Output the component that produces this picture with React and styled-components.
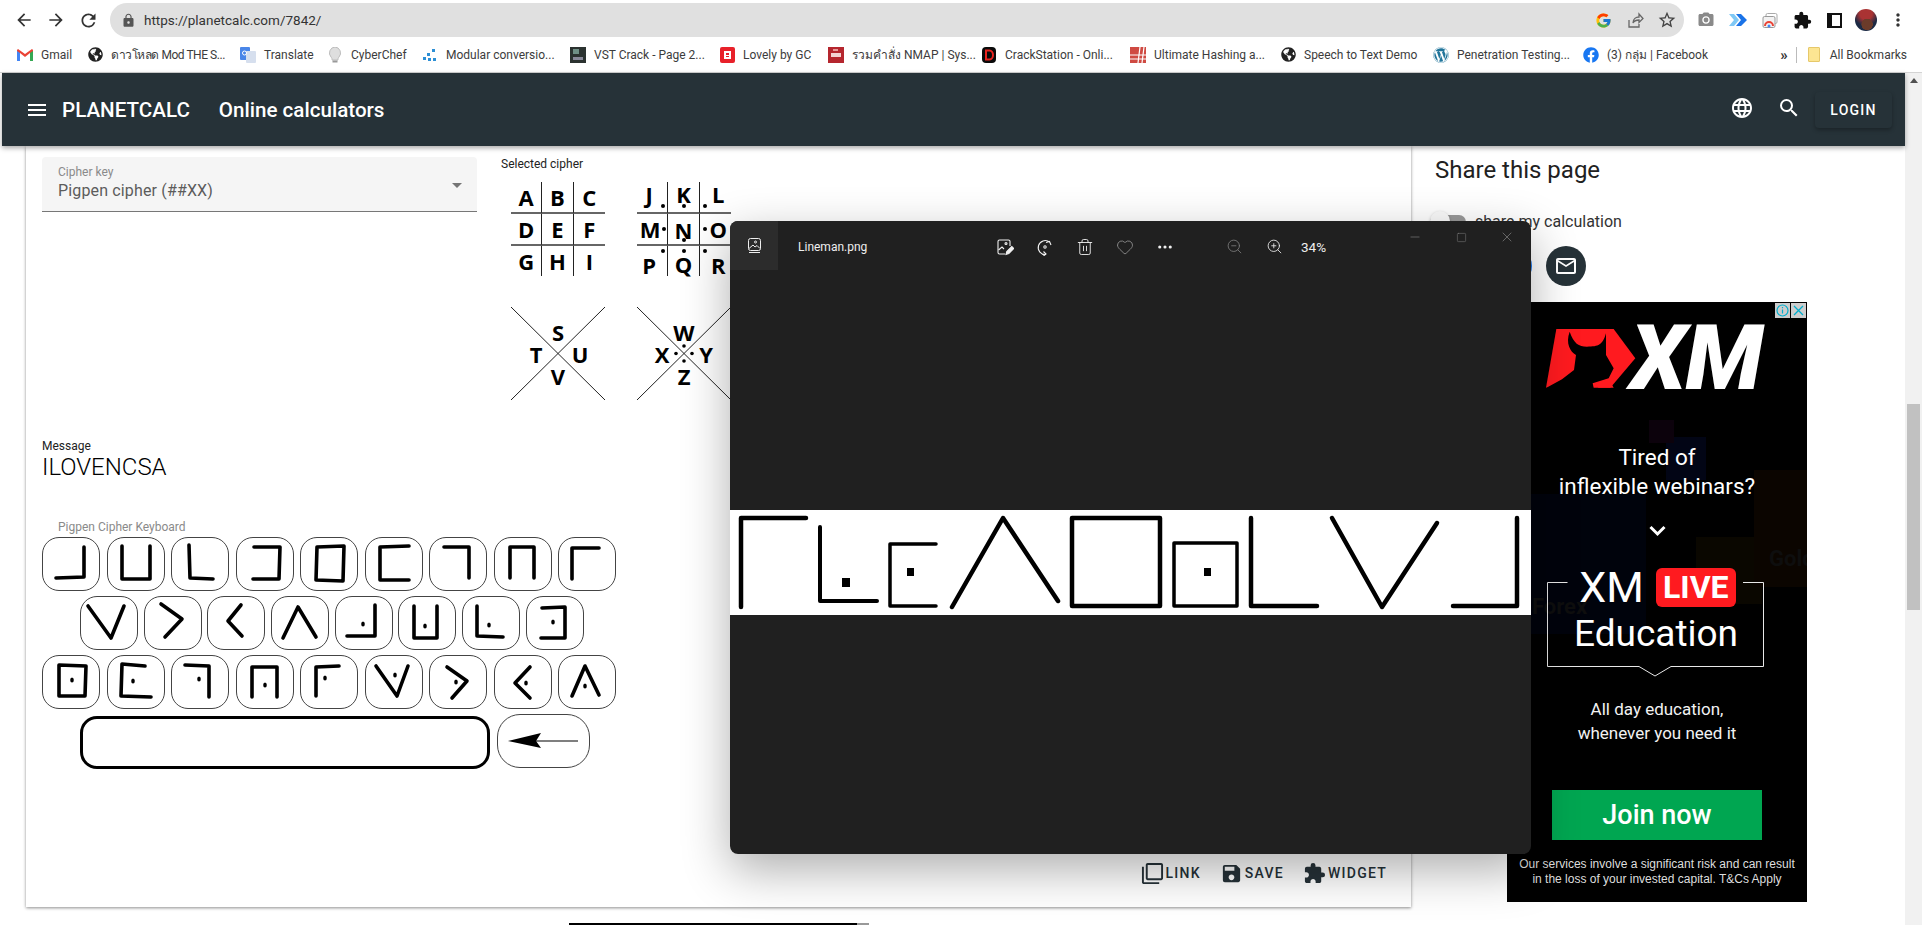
import React from 'react'
import styled, { createGlobalStyle } from 'styled-components'
import {
  MdArrowBack,
  MdArrowForward,
  MdRefresh,
  MdLock,
  MdStarBorder,
  MdCameraAlt,
  MdExtension,
  MdMoreVert,
  MdMenu,
  MdLanguage,
  MdSearch,
  MdMailOutline,
  MdFilterNone,
  MdSave,
} from 'react-icons/md'
import { FcGoogle } from 'react-icons/fc'
import { FaGlobeAmericas, FaWordpress, FaFacebook } from 'react-icons/fa'
import { Trash2, Heart, Ellipsis, ZoomIn, ZoomOut, Minus, Square, X } from 'lucide-react'

const GlobalStyle = createGlobalStyle`
  html, body {
    margin: 0;
    padding: 0;
    background: #fff;
    overflow: hidden;
    font-family: Roboto, "Liberation Sans", sans-serif;
  }
  * {
    box-sizing: border-box;
  }
`

const Page = styled.div`
  position: relative;
  width: 1922px;
  height: 925px;
  overflow: hidden;
  display: flex;
  flex-direction: column;
`

/* browser chrome */

const Toolbar = styled.div`
  height: 37px;
  padding: 3px 8px 0;
  display: flex;
  align-items: flex-start;
  color: #333;
`

const ToolButton = styled.div`
  width: ${(p) => p.$w || 32}px;
  height: 34px;
  flex-shrink: 0;
  display: flex;
  align-items: center;
  justify-content: center;
  color: ${(p) => p.$color || '#333'};
`

const UrlBar = styled.div`
  flex: 1;
  height: 34px;
  margin: 0 6px;
  padding: 0 1px 0 11px;
  border-radius: 17px;
  background: #e0e0e0;
  display: flex;
  align-items: center;
  font-size: 13.5px;
  color: #333;
`

const UrlText = styled.span`
  margin-left: 8px;
`

const UrlTools = styled.div`
  margin-left: auto;
  display: flex;
`

const Avatar = styled.div`
  width: 22px;
  height: 22px;
  border-radius: 50%;
  background: radial-gradient(circle at 55% 70%, #6b3b2a 0 28%, transparent 30%),
    radial-gradient(circle at 50% 20%, #a33 0 30%, #1c2a44 60%);
`

const Bookmarks = styled.div`
  height: 36px;
  padding: 0 15px 0 17px;
  display: flex;
  align-items: center;
  border-bottom: 1px solid #d4d4d4;
  font-size: 12px;
  color: #3c3c3c;
`

const Bookmark = styled.div`
  width: ${(p) => (p.$w ? `${p.$w}px` : 'auto')};
  flex-shrink: 0;
  display: flex;
  align-items: center;
  gap: 8px;
  white-space: nowrap;
  letter-spacing: ${(p) => (p.$tight ? '-0.45px' : 'normal')};
`

const BookmarksEnd = styled.div`
  margin-left: auto;
  display: flex;
  align-items: center;
`

const Chevrons = styled.span`
  font-size: 15px;
  font-weight: 700;
  color: #333;
`

const BarDivider = styled.span`
  width: 1px;
  height: 16px;
  margin: 0 11px 0 8px;
  background: #bbb;
`

const Folder = styled.span`
  width: 12px;
  height: 15px;
  margin-right: 10px;
  background: #fce592;
  border: 1px solid #e6c86a;
  border-radius: 1px;
`

const Fav = styled.span`
  width: 16px;
  height: 16px;
  flex-shrink: 0;
  display: flex;
  align-items: center;
  justify-content: center;
`

/* site */

const AppRow = styled.div`
  flex: 1;
  min-height: 0;
  display: flex;
  padding-left: 2px;
`

const Main = styled.div`
  flex: 1;
  min-width: 0;
  display: flex;
  flex-direction: column;
`

const AppBar = styled.header`
  position: relative;
  z-index: 2;
  height: 73px;
  flex-shrink: 0;
  padding: 0 13px 0 23px;
  display: flex;
  align-items: center;
  background: #263238;
  color: #fff;
  box-shadow: 0 2px 5px rgba(0, 0, 0, 0.35);
`

const Brand = styled.span`
  margin-left: 13px;
  font-size: 20.6px;
  font-weight: 500;
`

const AppTitle = styled.span`
  margin-left: 29px;
  font-size: 20.6px;
  font-weight: 500;
`

const BarIcon = styled.span`
  display: flex;
  margin-left: ${(p) => p.$ml};
  margin-top: -3px;
`

const LoginButton = styled.button`
  width: 77px;
  height: 36px;
  margin-left: 14px;
  border: 0;
  border-radius: 4px;
  background: #263238;
  color: #fff;
  font-family: inherit;
  font-size: 14px;
  font-weight: 500;
  letter-spacing: 1.25px;
  box-shadow: 0 2px 4px rgba(0, 0, 0, 0.3);
`

const Content = styled.div`
  flex: 1;
  min-height: 0;
  padding-left: 24px;
  display: flex;
`

const Column = styled.div`
  width: 1385px;
  flex-shrink: 0;
  display: flex;
  flex-direction: column;
`

const Card = styled.main`
  height: 761px;
  padding: 11px 24px 23px 16px;
  display: flex;
  flex-direction: column;
  background: #fff;
  box-shadow: 0 1px 3px rgba(0, 0, 0, 0.45);
`

const NextAd = styled.div`
  width: 300px;
  height: 2px;
  margin: 16px 0 0 543px;
  background: linear-gradient(90deg, #000 0 96%, #999 96%);
`

const TopRow = styled.div`
  display: flex;
`

const SelectBox = styled.div`
  width: 435px;
  height: 55px;
  padding: 7px 16px 0;
  position: relative;
  background: #f5f5f5;
  border-bottom: 1px solid #777;
  border-radius: 4px 4px 0 0;
`

const SelectLabel = styled.div`
  font-size: 12px;
  line-height: 16px;
  color: #8a8a8a;
`

const SelectValue = styled.div`
  margin-top: 1px;
  font-size: 16px;
  line-height: 20px;
  letter-spacing: 0.15px;
  color: #5c5c5c;
`

const SelectArrow = styled.span`
  position: absolute;
  right: 15px;
  top: 26px;
  border-left: 5px solid transparent;
  border-right: 5px solid transparent;
  border-top: 5px solid #757575;
`

const CipherColumn = styled.div`
  margin-left: 24px;
  width: 240px;
`

const SmallLabel = styled.div`
  font-size: 12px;
  line-height: 14px;
  color: ${(p) => p.$color || '#222'};
`

const CipherCharts = styled.div`
  margin: 11px 0 0 10px;
  display: grid;
  grid-template-columns: 94px 94px;
  grid-auto-rows: 93px;
  gap: 32px;
`

const LetterGrid = styled.div`
  display: grid;
  grid-template-columns: repeat(3, 1fr);
  grid-template-rows: repeat(3, 1fr);
`

const Cell = styled.div`
  position: relative;
  display: flex;
  align-items: center;
  justify-content: center;
  font-family: "Open Sans", sans-serif;
  font-size: 22px;
  font-weight: 700;
  color: #000;
  border-right: ${(p) => (p.$col < 2 ? '1px solid #222' : '0')};
  border-bottom: ${(p) => (p.$row < 2 ? '2px solid #666' : '0')};
`

const CellLetter = styled.span`
  transform: translate(${(p) => p.$dx || 0}px, ${(p) => p.$dy || 0}px);
`

const CellDot = styled.i`
  position: absolute;
  left: ${(p) => p.$x}px;
  top: ${(p) => p.$y}px;
  width: 4px;
  height: 4px;
  border-radius: 50%;
  background: #000;
`

const CrossChart = styled.div`
  position: relative;
  display: grid;
  grid-template-columns: repeat(3, 22px);
  grid-template-rows: repeat(3, 22px);
  justify-content: center;
  align-content: center;
`

const CrossLines = styled.svg`
  position: absolute;
  inset: 0;
`

const CrossLetter = styled.span`
  position: relative;
  grid-column: ${(p) => p.$c};
  grid-row: ${(p) => p.$r};
  display: flex;
  align-items: center;
  justify-content: center;
  font-family: "Open Sans", sans-serif;
  font-size: 22px;
  font-weight: 700;
  color: #000;
`

const MessageBlock = styled.div`
  margin-top: 39px;
`

const MessageValue = styled.div`
  font-size: 24px;
  line-height: 28px;
  font-weight: 300;
  color: #000;
`

const KeyboardLabel = styled(SmallLabel)`
  margin: 39px 0 3px 16px;
`

const KeyRow = styled.div`
  display: flex;
  gap: ${(p) => p.$gap || 6.5}px;
  margin-bottom: 5px;
  padding-left: ${(p) => p.$indent || 0}px;
`

const Key = styled.div`
  width: 58px;
  height: 54px;
  flex-shrink: 0;
  border: 1px solid #444;
  border-radius: 17px;
  background: #fff;
`

const SpaceKey = styled.div`
  width: 410px;
  height: 53px;
  margin-top: 2px;
  border: 3px solid #000;
  border-radius: 17px;
  background: #fff;
`

const BackKey = styled.div`
  width: 93px;
  height: 54px;
  border: 1px solid #444;
  border-radius: 23px;
  background: #fff;
`

const CardFooter = styled.div`
  margin-top: auto;
  display: flex;
  justify-content: flex-end;
  gap: 19px;
`

const FooterAction = styled.div`
  height: 22px;
  display: flex;
  align-items: center;
  gap: 2px;
  font-size: 14px;
  font-weight: 500;
  letter-spacing: 1.25px;
  color: #263238;
`

const Side = styled.aside`
  flex: 1;
  padding-left: 24px;
`

const ShareTitle = styled.h3`
  margin: 8px 0 0;
  font-size: 24px;
  line-height: 32px;
  font-weight: 400;
  color: #212121;
`

const ToggleRow = styled.div`
  margin: 26px 0 0 -5px;
  display: flex;
  align-items: center;
  font-size: 16px;
  color: #333;
`

const Toggle = styled.div`
  position: relative;
  width: 36px;
  height: 14px;
  margin-right: 9px;
  border-radius: 7px;
  background: #9a9a9a;
`

const ToggleKnob = styled.span`
  position: absolute;
  left: 0;
  top: -4px;
  width: 20px;
  height: 20px;
  border-radius: 50%;
  background: #fafafa;
  box-shadow: 0 1px 3px rgba(0, 0, 0, 0.25);
`

const ShareIcons = styled.div`
  margin: 15px 0 0 57px;
  display: flex;
  gap: 14px;
`

const ShareCircle = styled.div`
  width: 40px;
  height: 40px;
  border-radius: 50%;
  background: ${(p) => p.$bg};
  color: #fff;
  display: flex;
  align-items: center;
  justify-content: center;
`

const Scrollbar = styled.div`
  position: relative;
  width: 17px;
  flex-shrink: 0;
  padding: 5px 2px 0;
  background: #f1f1f1;
  display: flex;
  flex-direction: column;
  align-items: center;
`

const ScrollArrow = styled.span`
  border-left: 4px solid transparent;
  border-right: 4px solid transparent;
  border-bottom: 5px solid #505050;
`

const ScrollThumb = styled.div`
  width: 13px;
  height: 206px;
  margin-top: 321px;
  background: #c1c1c1;
`

/* advert */

const Ad = styled.div`
  position: relative;
  width: 300px;
  height: 600px;
  margin: 16px 0 0 72px;
  overflow: hidden;
  color: #fff;
  text-align: center;
  background:
    linear-gradient(#0c020c, #0c020c) 142px 118px / 25px 23px no-repeat,
    linear-gradient(#020515, #020515) 159px 135px / 40px 43px no-repeat,
    linear-gradient(#0b0500, #0b0500) 247px 168px / 53px 117px no-repeat,
    linear-gradient(#0a0700, #0a0700) 189px 235px / 66px 67px no-repeat,
    linear-gradient(#00030c, #00030c) 23px 192px / 116px 140px no-repeat,
    #000;
`

const AdChips = styled.div`
  position: absolute;
  top: 1px;
  right: 1px;
  display: flex;
  gap: 1px;
`

const AdChip = styled.span`
  width: 15px;
  height: 15px;
  background: #cdcdcd;
  color: #00aecd;
  display: flex;
  align-items: center;
  justify-content: center;
`

const FaintWord = styled.span`
  position: absolute;
  left: ${(p) => p.$x}px;
  top: ${(p) => p.$y}px;
  font-size: 22px;
  font-weight: 700;
  color: #0e0e0e;
`

const AdLogo = styled.div`
  position: relative;
  height: 59px;
  margin-top: 27px;
  padding-left: 39px;
  display: flex;
  align-items: center;
`

const AdWordmark = styled.span`
  margin-left: -6px;
  font-size: 91px;
  line-height: 59px;
  font-weight: 900;
  font-style: italic;
  letter-spacing: -1px;
  color: #fff;
`

const AdQuestion = styled.div`
  position: relative;
  margin-top: 55px;
  font-size: 22.5px;
  line-height: 29px;
`

const AdChevron = styled.div`
  position: relative;
  margin-top: 24px;
  height: 14px;
  display: flex;
  justify-content: center;
`

const EduBox = styled.div`
  position: relative;
  width: 216px;
  height: 99px;
  margin: 29px 0 0 41px;
`

const EduFrame = styled.svg`
  position: absolute;
  left: -1px;
  top: 14px;
`

const EduRow = styled.div`
  position: relative;
  display: flex;
  justify-content: center;
  align-items: center;
  gap: 12px;
`

const EduBrand = styled.span`
  font-size: 43px;
  line-height: 39px;
`

const LiveBadge = styled.span`
  width: 80px;
  height: 39px;
  margin-right: -3px;
  border-radius: 6px;
  background: #ff1a1f;
  font-size: 32px;
  line-height: 39px;
  font-weight: 700;
`

const EduText = styled.div`
  position: relative;
  margin-top: 4px;
  font-size: 37px;
  line-height: 46px;
`

const AdCopy = styled.div`
  position: relative;
  margin-top: 31px;
  font-size: 17px;
  line-height: 23.5px;
  color: #f2f2f2;
`

const JoinButton = styled.div`
  position: relative;
  width: 210px;
  height: 50px;
  margin: 45px 0 0 45px;
  background: #00a651;
  font-size: 27px;
  line-height: 50px;
  font-weight: 500;
`

const AdLegal = styled.div`
  position: relative;
  margin-top: 17px;
  font-family: "Liberation Sans", sans-serif;
  font-size: 12px;
  line-height: 15px;
  color: #dedede;
`

/* photos window */

const Viewer = styled.section`
  position: absolute;
  z-index: 5;
  left: 730px;
  top: 221px;
  width: 801px;
  height: 633px;
  display: flex;
  flex-direction: column;
  overflow: hidden;
  border-radius: 8px;
  background: #202020;
  color: #eee;
`

const ViewerShadow = styled.div`
  position: absolute;
  z-index: 4;
  left: 730px;
  top: 221px;
  width: 801px;
  height: 633px;
  border-radius: 8px;
  box-shadow: 0 16px 48px rgba(0, 0, 0, 0.32);
`

const ViewerBar = styled.div`
  height: 49px;
  padding-top: 2px;
  flex-shrink: 0;
  display: flex;
  align-items: center;
`

const GalleryTab = styled.div`
  width: 48px;
  height: 49px;
  margin-top: -2px;
  background: #2c2c2c;
  display: flex;
  align-items: center;
  justify-content: center;
`

const FileName = styled.span`
  width: 187px;
  margin-left: 20px;
  font-size: 12px;
`

const ViewerTool = styled.div`
  width: ${(p) => p.$w || 40}px;
  height: 40px;
  flex-shrink: 0;
  display: flex;
  align-items: center;
  justify-content: center;
  color: ${(p) => p.$color || '#f0f0f0'};
`

const ZoomGroup = styled.div`
  margin-left: 30px;
  display: flex;
  align-items: center;
`

const ZoomValue = styled.span`
  margin-left: 7px;
  font-size: 13.5px;
`

const WindowControls = styled.div`
  margin: -19px 1px 0 auto;
  display: flex;
`

const WindowControl = styled.div`
  width: 46px;
  height: 34px;
  display: flex;
  align-items: center;
  justify-content: center;
  color: #8a8a8a;
`

const Stage = styled.div`
  flex: 1;
  display: flex;
  align-items: center;
`

const StripImage = styled.svg`
  display: block;
  background: #fff;
`

/* data */

const bookmarks = [
  { w: 70, kind: 'gmail', label: 'Gmail' },
  { w: 153, kind: 'globe', label: 'ดาวโหลด Mod THE S...', tight: true },
  { w: 87, kind: 'translate', label: 'Translate' },
  { w: 95, kind: 'chef', label: 'CyberChef' },
  { w: 148, kind: 'modular', label: 'Modular conversio...' },
  { w: 149, kind: 'vst', label: 'VST Crack - Page 2...' },
  { w: 109, kind: 'lovely', label: 'Lovely by GC' },
  { w: 153, kind: 'nmap', label: 'รวมคำสั่ง NMAP | Sys...' },
  { w: 149, kind: 'crack', label: 'CrackStation - Onli...' },
  { w: 150, kind: 'hash', label: 'Ultimate Hashing a...' },
  { w: 153, kind: 'globe', label: 'Speech to Text Demo' },
  { w: 150, kind: 'wp', label: 'Penetration Testing...' },
  { w: 0, kind: 'fb', label: '(3) กลุ่ม | Facebook' },
]

const favicon = (kind) => {
  switch (kind) {
    case 'gmail':
      return (
        <svg width="16" height="14" viewBox="0 0 16 14">
          <path d="M0 2v11h3V5l5 4 5-4v8h3V2l-1-1-7 5-7-5z" fill="#ea4335" />
          <path d="M0 3v10h3V5z" fill="#4285f4" />
          <path d="M13 5v8h3V3z" fill="#34a853" />
        </svg>
      )
    case 'globe':
      return <FaGlobeAmericas size={15} color="#222" />
    case 'translate':
      return (
        <svg width="16" height="16" viewBox="0 0 16 16">
          <rect x="0" y="0" width="10" height="13" rx="1" fill="#4a86e8" />
          <rect x="6" y="4" width="10" height="12" rx="1" fill="#d6dfee" />
          <circle cx="4.5" cy="6" r="2" fill="none" stroke="#fff" strokeWidth="1" />
        </svg>
      )
    case 'chef':
      return (
        <svg width="14" height="16" viewBox="0 0 14 16">
          <path d="M7 0a6 6 0 0 0-4 10c1 1 1 2 1 3h6c0-1 0-2 1-3A6 6 0 0 0 7 0z" fill="#dedede" stroke="#bdbdbd" />
          <rect x="4.5" y="13.5" width="5" height="2" fill="#999" />
        </svg>
      )
    case 'modular':
      return (
        <svg width="14" height="14" viewBox="0 0 14 14" fill="#2d8fd5">
          <rect x="9" y="1" width="3" height="3" />
          <rect x="4" y="5" width="3" height="3" />
          <rect x="0" y="9" width="3" height="3" />
          <rect x="5" y="10" width="3" height="3" />
          <rect x="10" y="10" width="3" height="3" />
        </svg>
      )
    case 'vst':
      return (
        <svg width="16" height="16" viewBox="0 0 16 16">
          <rect width="16" height="16" fill="#2b3230" />
          <rect x="3" y="2" width="6" height="5" fill="#6f8f86" />
          <rect x="3" y="10" width="10" height="3" fill="#889" />
        </svg>
      )
    case 'lovely':
      return (
        <svg width="15" height="16" viewBox="0 0 15 16">
          <rect width="15" height="16" rx="2" fill="#e8212a" />
          <path d="M4 4h7v8H4z" fill="#fff" />
          <path d="M6 6h3v2H6zM6 9h3v1H6z" fill="#e8212a" />
        </svg>
      )
    case 'nmap':
      return (
        <svg width="16" height="16" viewBox="0 0 16 16">
          <rect width="16" height="16" fill="#b5262e" />
          <rect x="3" y="6" width="10" height="4" fill="#f3d3d3" />
          <rect x="5" y="2" width="5" height="2" fill="#e89a9a" />
        </svg>
      )
    case 'crack':
      return (
        <svg width="14" height="16" viewBox="0 0 14 16">
          <rect width="14" height="16" rx="4" fill="#0a0a0a" />
          <path d="M4 3.5h3.5a3.5 4.5 0 0 1 0 9H4z" fill="none" stroke="#e8231f" strokeWidth="2" />
        </svg>
      )
    case 'hash':
      return (
        <svg width="16" height="16" viewBox="0 0 16 16">
          <rect width="16" height="16" fill="#cf4a42" />
          <path d="M0 8h16M0 12h16M10 0 8 16M14 0l-2 16" stroke="#fff" strokeWidth="1.2" />
        </svg>
      )
    case 'wp':
      return <FaWordpress size={16} color="#21759b" />
    case 'fb':
      return <FaFacebook size={16} color="#1877f2" />
    default:
      return null
  }
}

const cipherOne = ['A', 'B', 'C', 'D', 'E', 'F', 'G', 'H', 'I']

const cipherTwo = [
  { l: 'J', dx: -3, dy: -3, dot: [24, 22] },
  { l: 'K', dy: -3, dot: [14, 22] },
  { l: 'L', dx: 3, dy: -3, dot: [3, 22] },
  { l: 'M', dx: -2, dot: [25, 13] },
  { l: 'N', dy: 1, dot: [14, 24] },
  { l: 'O', dx: 3, dot: [3, 13] },
  { l: 'P', dx: -3, dy: 4, dot: [24, 3] },
  { l: 'Q', dy: 3, dot: [14, 3] },
  { l: 'R', dx: 3, dy: 4, dot: [3, 3] },
]

// stroke points of each keyboard glyph, measured on a 58x54 key
const keyRows = [
  {
    indent: 0,
    keys: [
      { p: '14,41 42,40 42,10' },
      { p: '15,9 15,42 43,42 43,9' },
      { p: '18,8 19,41 42,42' },
      { p: '18,10 44,10 43,42 17,42' },
      { p: '17,10 44,9 43,44 16,43 17,10' },
      { p: '44,9 15,10 15,43 44,43' },
      { p: '15,10 40,10 40,41' },
      { p: '16,41 16,10 40,10 40,41' },
      { p: '14,42 14,11 41,11' },
    ],
  },
  {
    indent: 38,
    gap: 5.7,
    keys: [
      { p: '8,10 31,42 44,10' },
      { p: '17,8 38,23 21,41' },
      { p: '34,9 21,25 35,40' },
      { p: '12,42 27,11 45,41' },
      { p: '12,40 40,40 40,9', d: [28, 28] },
      { p: '16,10 16,42 39,42 39,10', d: [27, 30] },
      { p: '15,10 15,40 41,41', d: [27, 29] },
      { p: '16,12 39,11 39,42 15,42', d: [27, 26] },
    ],
  },
  {
    indent: 0,
    keys: [
      { p: '17,10 44,11 43,41 17,41 17,10', d: [30, 25] },
      { p: '38,11 15,9 14,41 44,42', d: [26, 26] },
      { p: '14,10 38,11 38,42', d: [28, 24] },
      { p: '16,42 16,12 41,12 41,42', d: [29, 30] },
      { p: '16,41 16,12 39,11', d: [25, 23] },
      { p: '11,11 32,41 43,11', d: [30, 20] },
      { p: '18,12 38,26 23,43', d: [27, 27] },
      { p: '36,12 21,28 36,43', d: [32, 28] },
      { p: '14,41 27,11 41,40', d: [27, 31] },
    ],
  },
]

const KeyGlyph = ({ p, d }) => (
  <svg width="56" height="52" viewBox="1 1 56 52">
    <polyline
      points={p}
      fill="none"
      stroke="#000"
      strokeWidth="3.6"
      strokeLinecap="round"
      strokeLinejoin="round"
    />
    {d && <ellipse cx={d[0]} cy={d[1]} rx="1.8" ry="2.6" fill="#000" />}
  </svg>
)

// the pigpen message in the opened picture, in strip pixels
const stripStrokes = [
  { p: '11,97 11,8 76,8', w: 4.5 },
  { p: '90,17 90,91 147,91', w: 4 },
  { p: '206,34 160,34 160,96 206,96', w: 3.5 },
  { p: '222,97 273,8 328,91', w: 4.5 },
  { p: '342,8 430,8 430,96 342,96 342,8', w: 4.5 },
  { p: '444,33 507,33 507,96 444,96 444,33', w: 3.5 },
  { p: '521,8 521,96 587,96', w: 4.5 },
  { p: '602,8 652,97 707,13', w: 4.5 },
  { p: '787,8 787,96 723,96', w: 4.5 },
]

const stripDots = [
  [112, 68, 8, 9],
  [177, 58, 7, 8],
  [474, 58, 7, 8],
]

const App = () => (
  <Page>
    <GlobalStyle />

    <Toolbar>
      <ToolButton><MdArrowBack size={20} /></ToolButton>
      <ToolButton><MdArrowForward size={20} /></ToolButton>
      <ToolButton><MdRefresh size={21} /></ToolButton>
      <UrlBar>
        <MdLock size={15} color="#555" />
        <UrlText>https://planetcalc.com/7842/</UrlText>
        <UrlTools>
          <ToolButton><FcGoogle size={17} /></ToolButton>
          <ToolButton $color="#666">
            <svg width="17" height="17" viewBox="0 0 17 17" fill="none" stroke="#666" strokeWidth="1.3">
              <path d="M2 8v7h10v-3M6 11c0-4 3-6 6-6V2l4 4.5-4 4V8c-3 0-5 1-6 3z" />
            </svg>
          </ToolButton>
          <ToolButton><MdStarBorder size={20} color="#444" /></ToolButton>
        </UrlTools>
      </UrlBar>
      <ToolButton $color="#8a8a8a"><MdCameraAlt size={18} /></ToolButton>
      <ToolButton>
        <svg width="18" height="14" viewBox="0 0 18 14">
          <path d="M0 1h5l5 6-5 6H0l5-6z" fill="#7fc8f5" />
          <path d="M7 1h5l6 6-6 6H7l5-6z" fill="#1a73e8" />
        </svg>
      </ToolButton>
      <ToolButton>
        <svg width="16" height="15" viewBox="0 0 16 15">
          <rect x="4" y="0.5" width="11" height="10" rx="1.5" fill="none" stroke="#aaa" />
          <rect x="1" y="3.5" width="12" height="11" rx="1.5" fill="#f2f2f2" stroke="#999" />
          <path d="M3 13a4 4 0 0 1 8 0" fill="none" stroke="#ea4335" strokeWidth="2" />
          <circle cx="7" cy="13" r="1.5" fill="#4285f4" />
        </svg>
      </ToolButton>
      <ToolButton $color="#111"><MdExtension size={19} /></ToolButton>
      <ToolButton>
        <svg width="15" height="15" viewBox="0 0 15 15">
          <rect x="1" y="1" width="13" height="13" fill="#fff" stroke="#111" strokeWidth="2" />
          <rect x="1" y="1" width="4" height="13" fill="#111" />
        </svg>
      </ToolButton>
      <ToolButton><Avatar /></ToolButton>
      <ToolButton $color="#333"><MdMoreVert size={20} /></ToolButton>
    </Toolbar>

    <Bookmarks>
      {bookmarks.map((b) => (
        <Bookmark key={b.label} $w={b.w} $tight={b.tight}>
          <Fav>{favicon(b.kind)}</Fav>
          <span>{b.label}</span>
        </Bookmark>
      ))}
      <BookmarksEnd>
        <Chevrons>»</Chevrons>
        <BarDivider />
        <Folder />
        <span>All Bookmarks</span>
      </BookmarksEnd>
    </Bookmarks>

    <AppRow>
      <Main>
        <AppBar>
          <MdMenu size={24} />
          <Brand>PLANETCALC</Brand>
          <AppTitle>Online calculators</AppTitle>
          <BarIcon $ml="auto"><MdLanguage size={24} /></BarIcon>
          <BarIcon $ml="23px"><MdSearch size={24} /></BarIcon>
          <LoginButton>LOGIN</LoginButton>
        </AppBar>

        <Content>
          <Column>
            <Card>
              <TopRow>
                <SelectBox>
                  <SelectLabel>Cipher key</SelectLabel>
                  <SelectValue>Pigpen cipher (##XX)</SelectValue>
                  <SelectArrow />
                </SelectBox>
                <CipherColumn>
                  <SmallLabel>Selected cipher</SmallLabel>
                  <CipherCharts>
                    <LetterGrid>
                      {cipherOne.map((l, i) => (
                        <Cell key={l} $col={i % 3} $row={Math.floor(i / 3)}>{l}</Cell>
                      ))}
                    </LetterGrid>
                    <LetterGrid>
                      {cipherTwo.map((c, i) => (
                        <Cell key={c.l} $col={i % 3} $row={Math.floor(i / 3)}>
                          <CellLetter $dx={c.dx} $dy={c.dy}>{c.l}</CellLetter>
                          <CellDot $x={c.dot[0]} $y={c.dot[1]} />
                        </Cell>
                      ))}
                    </LetterGrid>
                    <CrossChart>
                      <CrossLines width="94" height="93" viewBox="0 0 94 93">
                        <path d="M0 0 94 93M94 0 0 93" stroke="#222" strokeWidth="1" />
                      </CrossLines>
                      <CrossLetter $c={2} $r={1}>S</CrossLetter>
                      <CrossLetter $c={1} $r={2}>T</CrossLetter>
                      <CrossLetter $c={3} $r={2}>U</CrossLetter>
                      <CrossLetter $c={2} $r={3}>V</CrossLetter>
                    </CrossChart>
                    <CrossChart>
                      <CrossLines width="94" height="93" viewBox="0 0 94 93">
                        <path d="M0 0 94 93M94 0 0 93" stroke="#222" strokeWidth="1" />
                        <circle cx="47" cy="39" r="1.8" />
                        <circle cx="39" cy="46.5" r="1.8" />
                        <circle cx="55" cy="46.5" r="1.8" />
                        <circle cx="47" cy="54" r="1.8" />
                      </CrossLines>
                      <CrossLetter $c={2} $r={1}>W</CrossLetter>
                      <CrossLetter $c={1} $r={2}>X</CrossLetter>
                      <CrossLetter $c={3} $r={2}>Y</CrossLetter>
                      <CrossLetter $c={2} $r={3}>Z</CrossLetter>
                    </CrossChart>
                  </CipherCharts>
                </CipherColumn>
              </TopRow>

              <MessageBlock>
                <SmallLabel>Message</SmallLabel>
                <MessageValue>ILOVENCSA</MessageValue>
              </MessageBlock>

              <KeyboardLabel $color="#8a8a8a">Pigpen Cipher Keyboard</KeyboardLabel>
              {keyRows.map((row) => (
                <KeyRow key={row.keys[0].p} $indent={row.indent} $gap={row.gap}>
                  {row.keys.map((k) => (
                    <Key key={k.p}><KeyGlyph p={k.p} d={k.d} /></Key>
                  ))}
                </KeyRow>
              ))}
              <KeyRow $indent={38}>
                <SpaceKey />
                <BackKey>
                  <svg width="90" height="52" viewBox="0 0 90 52">
                    <path d="M10 26 43 18 38 26 43 33z" fill="#000" />
                    <path d="M38 26H80" stroke="#000" strokeWidth="1.2" />
                  </svg>
                </BackKey>
              </KeyRow>

              <CardFooter>
                <FooterAction><MdFilterNone size={23} />LINK</FooterAction>
                <FooterAction><MdSave size={23} />SAVE</FooterAction>
                <FooterAction><MdExtension size={23} />WIDGET</FooterAction>
              </CardFooter>
            </Card>
            <NextAd />
          </Column>

          <Side>
            <ShareTitle>Share this page</ShareTitle>
            <ToggleRow>
              <Toggle><ToggleKnob /></Toggle>
              share my calculation
            </ToggleRow>
            <ShareIcons>
              <ShareCircle $bg="#1877f2" />
              <ShareCircle $bg="#263238"><MdMailOutline size={24} /></ShareCircle>
            </ShareIcons>
            <Ad>
              <FaintWord $x={25} $y={292}>Forex</FaintWord>
              <FaintWord $x={262} $y={244}>Gold</FaintWord>
              <AdChips>
                <AdChip>
                  <svg width="13" height="13" viewBox="0 0 13 13" fill="none" stroke="currentColor" strokeWidth="1.2">
                    <circle cx="6.5" cy="6.5" r="5.5" />
                    <path d="M6.5 5.5v4M6.5 3v1.2" />
                  </svg>
                </AdChip>
                <AdChip>
                  <svg width="11" height="11" viewBox="0 0 11 11" stroke="currentColor" strokeWidth="1.3">
                    <path d="M1 1l9 9M10 1l-9 9" />
                  </svg>
                </AdChip>
              </AdChips>
              <AdLogo>
                <svg width="90" height="59" viewBox="142 117 270 177">
                  <path d="M173 117H345L410 205 335 293 H142z" fill="#ff1a1f" />
                  <path
                    d="M213 125C200 160 215 185 232 195L226 240 190 268 142 294H285L282 280 330 265 345 235 322 195 322 130C312 165 300 170 265 170 240 170 225 160 213 125z"
                    fill="#000"
                  />
                  <path d="M285 283 330 266 345 293H300z" fill="#ff1a1f" />
                </svg>
                <AdWordmark>XM</AdWordmark>
              </AdLogo>
              <AdQuestion>Tired of<br />inflexible webinars?</AdQuestion>
              <AdChevron>
                <svg width="17" height="12" viewBox="0 0 17 12" fill="none" stroke="#fff" strokeWidth="3">
                  <path d="M1.5 2 8.5 9 15.5 2" />
                </svg>
              </AdChevron>
              <EduBox>
                <EduFrame width="218" height="96" viewBox="0 0 218 96" fill="none" stroke="#e8e8e8">
                  <path d="M20.5 .5H.5V84.5H92L108 94 124 84.5H216.5V.5H196" />
                </EduFrame>
                <EduRow>
                  <EduBrand>XM</EduBrand>
                  <LiveBadge>LIVE</LiveBadge>
                </EduRow>
                <EduText>Education</EduText>
              </EduBox>
              <AdCopy>All day education,<br />whenever you need it</AdCopy>
              <JoinButton>Join now</JoinButton>
              <AdLegal>
                Our services involve a significant risk and can result<br />
                in the loss of your invested capital. T&amp;Cs Apply
              </AdLegal>
            </Ad>
          </Side>
        </Content>
      </Main>
      <Scrollbar>
        <ScrollArrow />
        <ScrollThumb />
      </Scrollbar>
    </AppRow>

    <ViewerShadow />
    <Viewer>
      <ViewerBar>
        <GalleryTab>
          <svg width="17" height="17" viewBox="0 0 17 17" fill="none" stroke="#eee" strokeWidth="1">
            <rect x="2.5" y="1.5" width="12" height="12" rx="2" />
            <path d="M3 11.5 7 8l2 2 2-1.5 3 3M3 15.5h11" />
            <circle cx="9.5" cy="5" r="1" />
          </svg>
        </GalleryTab>
        <FileName>Lineman.png</FileName>
        <ViewerTool>
          <svg width="18" height="18" viewBox="0 0 18 18" fill="none" stroke="#f0f0f0" strokeWidth="1.1">
            <path d="M9 16H3.5A1.5 1.5 0 0 1 2 14.5V3.5A1.5 1.5 0 0 1 3.5 2h9A1.5 1.5 0 0 1 14 3.5V8" />
            <circle cx="10" cy="5.5" r="1" />
            <path d="M2.5 12 6 9l2 2" />
            <path d="M10 16.5l.8-3 5-5 2 2-5 5z" fill="#f0f0f0" />
          </svg>
        </ViewerTool>
        <ViewerTool>
          <svg width="18" height="18" viewBox="0 0 18 18" fill="none" stroke="#f0f0f0" strokeWidth="1.1">
            <path d="M4.5 4A7 7 0 1 1 8 16.5M3 7l1.5-3.500L8 4.500" transform="matrix(-1 0 0 1 18 0)" />
            <circle cx="9" cy="9" r="1.2" />
            <path d="M7.5 13.5 10 16l-2.500 2" />
          </svg>
        </ViewerTool>
        <ViewerTool><Trash2 size={18} strokeWidth={1.2} /></ViewerTool>
        <ViewerTool $color="#8c8c8c"><Heart size={18} strokeWidth={1.2} /></ViewerTool>
        <ViewerTool><Ellipsis size={18} strokeWidth={2.2} /></ViewerTool>
        <ZoomGroup>
          <ViewerTool $w={39} $color="#7c7c7c"><ZoomOut size={17} strokeWidth={1.2} /></ViewerTool>
          <ViewerTool><ZoomIn size={17} strokeWidth={1.2} /></ViewerTool>
          <ZoomValue>34%</ZoomValue>
        </ZoomGroup>
        <WindowControls>
          <WindowControl><Minus size={14} strokeWidth={1} /></WindowControl>
          <WindowControl><Square size={11} strokeWidth={1} /></WindowControl>
          <WindowControl><X size={16} strokeWidth={1} /></WindowControl>
        </WindowControls>
      </ViewerBar>
      <Stage>
        <StripImage width="801" height="105" viewBox="0 0 801 105">
          {stripStrokes.map((s) => (
            <polyline
              key={s.p}
              points={s.p}
              fill="none"
              stroke="#000"
              strokeWidth={s.w}
              strokeLinecap="round"
              strokeLinejoin="round"
            />
          ))}
          {stripDots.map(([x, y, w, h]) => (
            <rect key={x} x={x} y={y} width={w} height={h} fill="#000" />
          ))}
        </StripImage>
      </Stage>
    </Viewer>
  </Page>
)

export default App
